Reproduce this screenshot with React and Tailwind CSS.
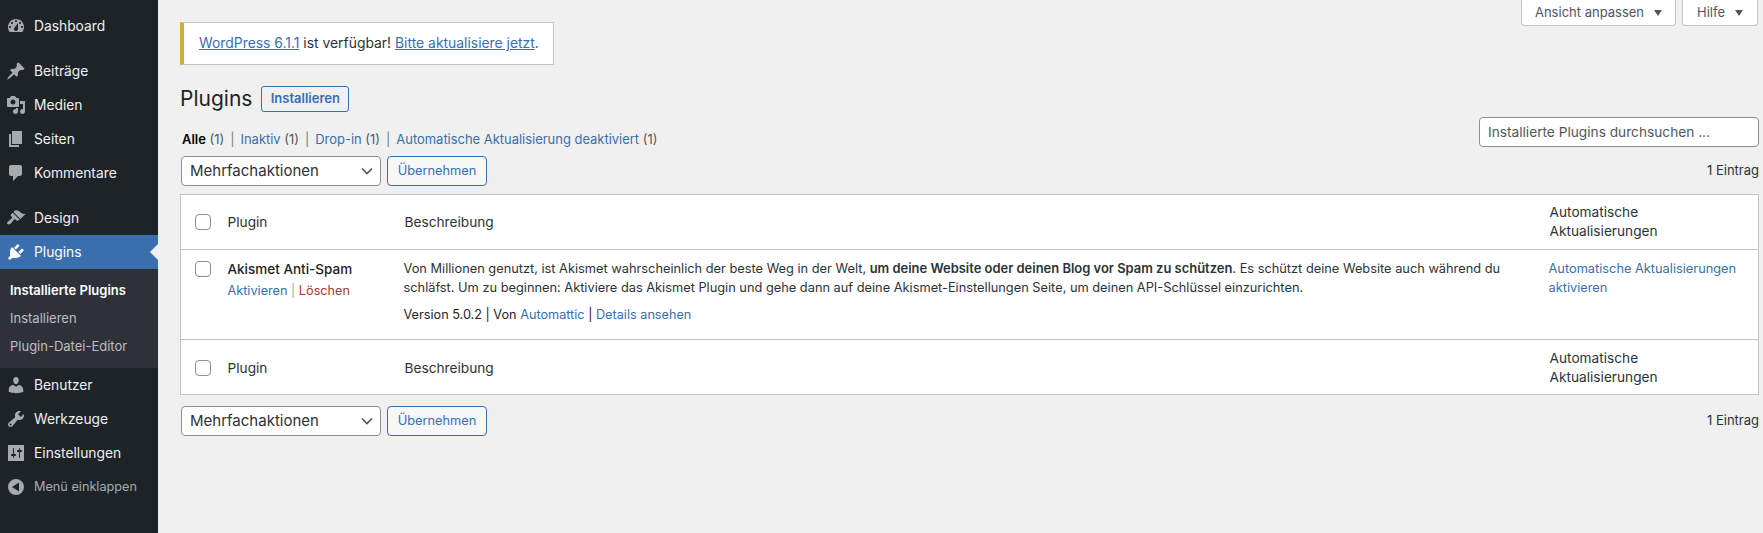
import React from 'react';

// dashicons-style paths for the admin menu
const ICONS = {
  dashboard: 'M3.76 16h12.48c1.1-1.37 1.76-3.11 1.76-5 0-4.42-3.58-8-8-8s-8 3.58-8 8c0 1.89.66 3.63 1.76 5zM10 4c.55 0 1 .45 1 1s-.45 1-1 1-1-.45-1-1 .45-1 1-1zM6 6c.55 0 1 .45 1 1s-.45 1-1 1-1-.45-1-1 .45-1 1-1zm8 0c.55 0 1 .45 1 1s-.45 1-1 1-1-.45-1-1 .45-1 1-1zm-5.37 5.55L12 7v6c0 1.1-.9 2-2 2s-2-.9-2-2c0-.57.24-1.08.63-1.45zM4 10c.55 0 1 .45 1 1s-.45 1-1 1-1-.45-1-1 .45-1 1-1zm12 0c.55 0 1 .45 1 1s-.45 1-1 1-1-.45-1-1 .45-1 1-1z',
  pin: 'M10.44 3.02l1.82-1.82 6.36 6.35-1.83 1.82c-1.05-.68-2.48-.57-3.41.36l-.75.75c-.92.93-1.04 2.35-.35 3.41l-1.83 1.82-2.41-2.41-2.8 2.79c-.42.42-3.38 2.71-3.8 2.29s1.86-3.39 2.28-3.81l2.79-2.79L4.1 9.36l1.83-1.82c1.05.69 2.48.57 3.4-.36l.75-.75c.93-.92 1.05-2.35.36-3.41z',
  media: 'M13 11V4c0-.55-.45-1-1-1h-1.67L9 1H5L3.67 3H2c-.55 0-1 .45-1 1v7c0 .55.45 1 1 1h10c.55 0 1-.45 1-1zM7 4.5c1.38 0 2.5 1.12 2.5 2.5S8.38 9.5 7 9.5 4.5 8.38 4.5 7 5.62 4.5 7 4.5zM14 6h5v10.5c0 1.38-1.12 2.5-2.5 2.5S14 17.88 14 16.5s1.12-2.5 2.5-2.5c.17 0 .34.02.5.05V9h-3V6zm-4 8.05V13h2v3.5c0 1.38-1.12 2.5-2.5 2.5S7 17.88 7 16.5 8.12 14 9.5 14c.17 0 .34.02.5.05z',
  page: 'M6 15V2h10v13H6zm-1 1h8v2H3V5h2v11z',
  comment: 'M5 2h9c1.1 0 2 .9 2 2v7c0 1.1-.9 2-2 2h-2l-5 5v-5H5c-1.1 0-2-.9-2-2V4c0-1.1.9-2 2-2z',
  brush: 'M14.48 11.06L7.41 3.99l1.5-1.5c.5-.56 2.3-.47 3.51.32 1.21.8 1.43 1.28 2.91 2.1 1.18.64 2.45 1.26 4.45.85zm-.71.71L6.7 4.7 4.93 6.47c-.39.39-.39 1.02 0 1.41l1.06 1.06c.39.39.39 1.03 0 1.42-.6.6-1.43 1.11-2.21 1.69-.35.26-.7.53-1.01.84C1.43 13.23.5 15.2 1.37 16.07c.87.87 2.84-.06 4.18-1.4.31-.31.58-.66.84-1.01.58-.78 1.09-1.61 1.69-2.21.39-.39 1.03-.39 1.42 0l1.06 1.06c.39.39 1.02.39 1.41 0z',
  plugin: 'M13.11 4.36L9.87 7.6 8 5.73l3.24-3.24c.35-.34 1.05-.2 1.56.32.52.51.66 1.21.31 1.55zm-8 1.77l.91-1.12 9.01 9.01-1.19.84c-.71.71-2.63 1.16-3.82 1.16H6.14L4.9 17.26c-.59.59-1.54.59-2.12 0-.59-.58-.59-1.53 0-2.12l1.24-1.24v-3.88c0-1.13.4-3.19 1.09-3.89zm7.26 3.97l3.24-3.24c.34-.35 1.04-.21 1.55.31.52.51.66 1.21.31 1.55l-3.24 3.25z',
  user: 'M10 9.25c-2.27 0-2.73-3.44-2.73-3.44C7 4.02 7.82 2 9.97 2c2.16 0 2.98 2.02 2.71 3.81 0 0-.41 3.44-2.68 3.44zm0 2.57L12.72 10c2.39 0 4.52 2.33 4.52 4.53v2.49s-3.65 1.13-7.24 1.13c-3.65 0-7.24-1.13-7.24-1.13v-2.49c0-2.25 1.94-4.48 4.47-4.48z',
  wrench: 'M16.68 9.77c-1.34 1.34-3.3 1.67-4.95.99l-5.41 6.52c-.99.99-2.59.99-3.58 0s-.99-2.59 0-3.57l6.52-5.42c-.68-1.65-.35-3.61.99-4.95 1.28-1.28 3.12-1.62 4.72-1.06l-2.89 2.89 2.82 2.82 2.86-2.87c.53 1.58.18 3.39-1.08 4.65zM3.81 16.21c.4.39 1.04.39 1.43 0 .4-.4.4-1.04 0-1.43-.39-.4-1.03-.4-1.43 0-.39.39-.39 1.03 0 1.43z',
  settings: 'M2 2h16v16H2zM8 11h1c.55 0 1 .45 1 1s-.45 1-1 1H8v1.5c0 .28-.22.5-.5.5s-.5-.22-.5-.5V13H6c-.55 0-1-.45-1-1s.45-1 1-1h1V5.5c0-.28.22-.5.5-.5s.5.22.5.5V11zm5-2h-1c-.55 0-1-.45-1-1s.45-1 1-1h1V5.5c0-.28.22-.5.5-.5s.5.22.5.5V7h1c.55 0 1 .45 1 1s-.45 1-1 1h-1v5.5c0 .28-.22.5-.5.5s-.5-.22-.5-.5V9z',
  collapse: 'M10 2a8 8 0 1 0 0 16 8 8 0 0 0 0-16zM13 5.5v9L6 10z',
};

const Icon = ({ name, className }) => (
  <svg viewBox="0 0 20 20" className={`h-5 w-5 shrink-0 ${className}`} fill="currentColor" fillRule="evenodd">
    <path d={ICONS[name]} />
  </svg>
);

const MenuItem = ({ icon, label, active }) => (
  <div className={`relative flex h-[34px] items-center pl-[6px] ${active ? 'bg-[#386fac] text-white' : 'text-[#f0f0f1]'}`}>
    <Icon name={icon} className={active ? 'text-white' : 'text-[#a7aaad]'} />
    <span className="ml-2 text-[13.8px]">{label}</span>
    {active && (
      <span className="absolute right-0 top-[9px] border-y-8 border-r-8 border-y-transparent border-r-[#f0f0f1]" />
    )}
  </div>
);

const BulkActions = ({ className }) => (
  <div className={`flex gap-[6px] ${className}`}>
    <div className="relative h-[30px] w-[200px]">
      <select className="h-full w-full appearance-none rounded-[4px] border border-[#8c8f94] bg-white pl-[8px] pt-px text-[15px] text-[#2c3338]">
        <option>Mehrfachaktionen</option>
      </select>
      <svg viewBox="0 0 12 8" className="pointer-events-none absolute right-[8px] top-[11px] h-2 w-3 text-[#50575e]" fill="none" stroke="currentColor" strokeWidth="1.6">
        <path d="M1 1.5l5 5 5-5" />
      </svg>
    </div>
    <button className="h-[30px] w-[100px] rounded-[4px] border border-[#386fac] bg-[#f6f7f7] text-[12.8px] text-[#386fac]">
      Übernehmen
    </button>
  </div>
);

const CheckBox = () => (
  <input type="checkbox" className="block h-4 w-4 appearance-none rounded-[4px] border border-[#8c8f94] bg-white" />
);

const HeadRow = ({ border, offset }) => (
  <tr className={`h-[55px] text-[13.7px] text-[#2c3338] ${border ? 'border-b border-[#c3c4c7]' : ''}`}>
    <td className={`pl-[14px] align-middle ${offset}`}><CheckBox /></td>
    <td className={`pl-[11px] align-middle ${offset}`}>Plugin</td>
    <td className={`pl-[10px] align-middle ${offset}`}>Beschreibung</td>
    <td className={`pl-[10px] align-middle leading-[19px] ${offset}`}>Automatische<br />Aktualisierungen</td>
  </tr>
);

const ScreenTab = ({ label, width }) => (
  <div className={`flex h-[26px] items-center justify-center gap-[10px] rounded-b-[4px] border border-t-0 border-[#c3c4c7] bg-white text-[13px] text-[#50575e] ${width}`}>
    {label}
    <span className="border-x-[4px] border-t-[6px] border-x-transparent border-t-[#50575e]" />
  </div>
);

const Sep = () => <span className="mx-[6px] text-[#787c82]">|</span>;

export default function App() {
  return (
    <div className="flex h-[533px] overflow-hidden bg-[#f0f0f0] font-['Inter',sans-serif]">
      <aside className="w-[158px] shrink-0 bg-[#1e2328] pt-[9px]">
        <MenuItem icon="dashboard" label="Dashboard" />
        <div className="h-[11px]" />
        <MenuItem icon="pin" label="Beiträge" />
        <MenuItem icon="media" label="Medien" />
        <MenuItem icon="page" label="Seiten" />
        <MenuItem icon="comment" label="Kommentare" />
        <div className="h-[11px]" />
        <MenuItem icon="brush" label="Design" />
        <MenuItem icon="plugin" label="Plugins" active />
        <div className="flex h-[99px] flex-col justify-center gap-[9px] bg-[#2e3238] pl-[10px] text-[13px] leading-[19px] text-[#bcbfc2]">
          <span className="font-semibold text-white">Installierte Plugins</span>
          <span>Installieren</span>
          <span>Plugin-Datei-Editor</span>
        </div>
        <MenuItem icon="user" label="Benutzer" />
        <MenuItem icon="wrench" label="Werkzeuge" />
        <MenuItem icon="settings" label="Einstellungen" />
        <div className="flex h-[34px] items-center pl-[6px] text-[#a7aaad]">
          <Icon name="collapse" />
          <span className="ml-2 text-[12.7px]">Menü einklappen</span>
        </div>
      </aside>

      <main className="min-w-0 flex-1 pl-[22px] pr-[4px]">
        <div className="mr-px flex h-[22px] justify-end gap-[6px] overflow-visible">
          <ScreenTab label="Ansicht anpassen" width="w-[155px]" />
          <ScreenTab label="Hilfe" width="w-[76px]" />
        </div>

        <div className="h-[43px] w-[374px] border border-l-4 border-[#c3c4c7] border-l-[#d4a83c] bg-white pl-[15px] text-[13.9px] leading-[41px] text-[#2c3338]">
          <a className="text-[#386fac] underline">WordPress 6.1.1</a> ist verfügbar!{' '}
          <a className="text-[#386fac] underline">Bitte aktualisiere jetzt</a>.
        </div>

        <div className="flex justify-between">
          <div>
            <div className="mt-[20px] flex items-center gap-[9px]">
              <h1 className="text-[21px] leading-[28px] text-[#1d2327]">Plugins</h1>
              <button className="h-[26px] w-[88px] rounded-[3px] border border-[#386fac] text-[13px] font-semibold text-[#386fac]">
                Installieren
              </button>
            </div>
            <div className="ml-[2px] mt-[17px] h-[18px] text-[12.95px] leading-[18px] text-[#50575e]">
              <span className="font-semibold text-black">Alle</span> (1)<Sep />
              <a className="text-[#386fac]">Inaktiv</a> (1)<Sep />
              <a className="text-[#386fac]">Drop-in</a> (1)<Sep />
              <a className="text-[#386fac]">Automatische Aktualisierung deaktiviert</a> (1)
            </div>
          </div>
          <input
            placeholder="Installierte Plugins durchsuchen ..."
            className="mt-[52px] h-[30px] w-[280px] rounded-[4px] border border-[#8c8f94] bg-white px-[8px] text-[13.7px] text-[#2c3338] placeholder:text-[#50575e]"
          />
        </div>

        <div className="mt-[8px] flex items-center justify-between">
          <BulkActions className="ml-px" />
          <span className="text-[13px] text-[#2c3338]">1 Eintrag</span>
        </div>

        <table className="mt-[8px] w-full table-fixed border border-[#c3c4c7] bg-white">
          <colgroup>
            <col className="w-[36px]" />
            <col className="w-[178px]" />
            <col />
            <col className="w-[219px]" />
          </colgroup>
          <thead>
            <HeadRow border />
          </thead>
          <tbody>
            <tr className="h-[90px] border-b border-[#c3c4c7] align-top text-[12.7px] leading-[19px] text-[#2c3338]">
              <td className="pl-[14px] pt-[11px]"><CheckBox /></td>
              <td className="pl-[11px] pt-[10px]">
                <div className="text-[13.5px] font-medium text-[#1d2327]">Akismet Anti-Spam</div>
                <div className="mt-[2px]">
                  <a className="text-[#386fac]">Aktivieren</a>
                  <span className="text-[#a7aaad]"> | </span>
                  <a className="text-[#a83a35]">Löschen</a>
                </div>
              </td>
              <td className="pl-[9px] pr-[20px] pt-[9px] text-[12.8px]">
                <p>
                  Von Millionen genutzt, ist Akismet wahrscheinlich der beste Weg in der Welt,{' '}
                  <strong className="text-[12.95px] font-semibold">um deine Website oder deinen Blog vor Spam zu schützen</strong>.
                  {' '}Es schützt deine Website auch während du
                  <br />
                  schläfst. Um zu beginnen: Aktiviere das Akismet Plugin und gehe dann auf deine Akismet-Einstellungen Seite, um deinen API-Schlüssel einzurichten.
                </p>
                <p className="mt-[8px] text-[12.7px] text-[#1d2327]">
                  Version 5.0.2 | Von <a className="text-[#386fac]">Automattic</a> | <a className="text-[#386fac]">Details ansehen</a>
                </p>
              </td>
              <td className="pl-[9px] pr-[10px] pt-[9px] text-[12.8px] text-[#386fac]">
                Automatische Aktualisierungen aktivieren
              </td>
            </tr>
          </tbody>
          <tfoot>
            <HeadRow offset="pt-[2px]" />
          </tfoot>
        </table>

        <div className="mt-[11px] flex items-center justify-between">
          <BulkActions className="ml-px" />
          <span className="text-[13px] text-[#2c3338]">1 Eintrag</span>
        </div>
      </main>
    </div>
  );
}
